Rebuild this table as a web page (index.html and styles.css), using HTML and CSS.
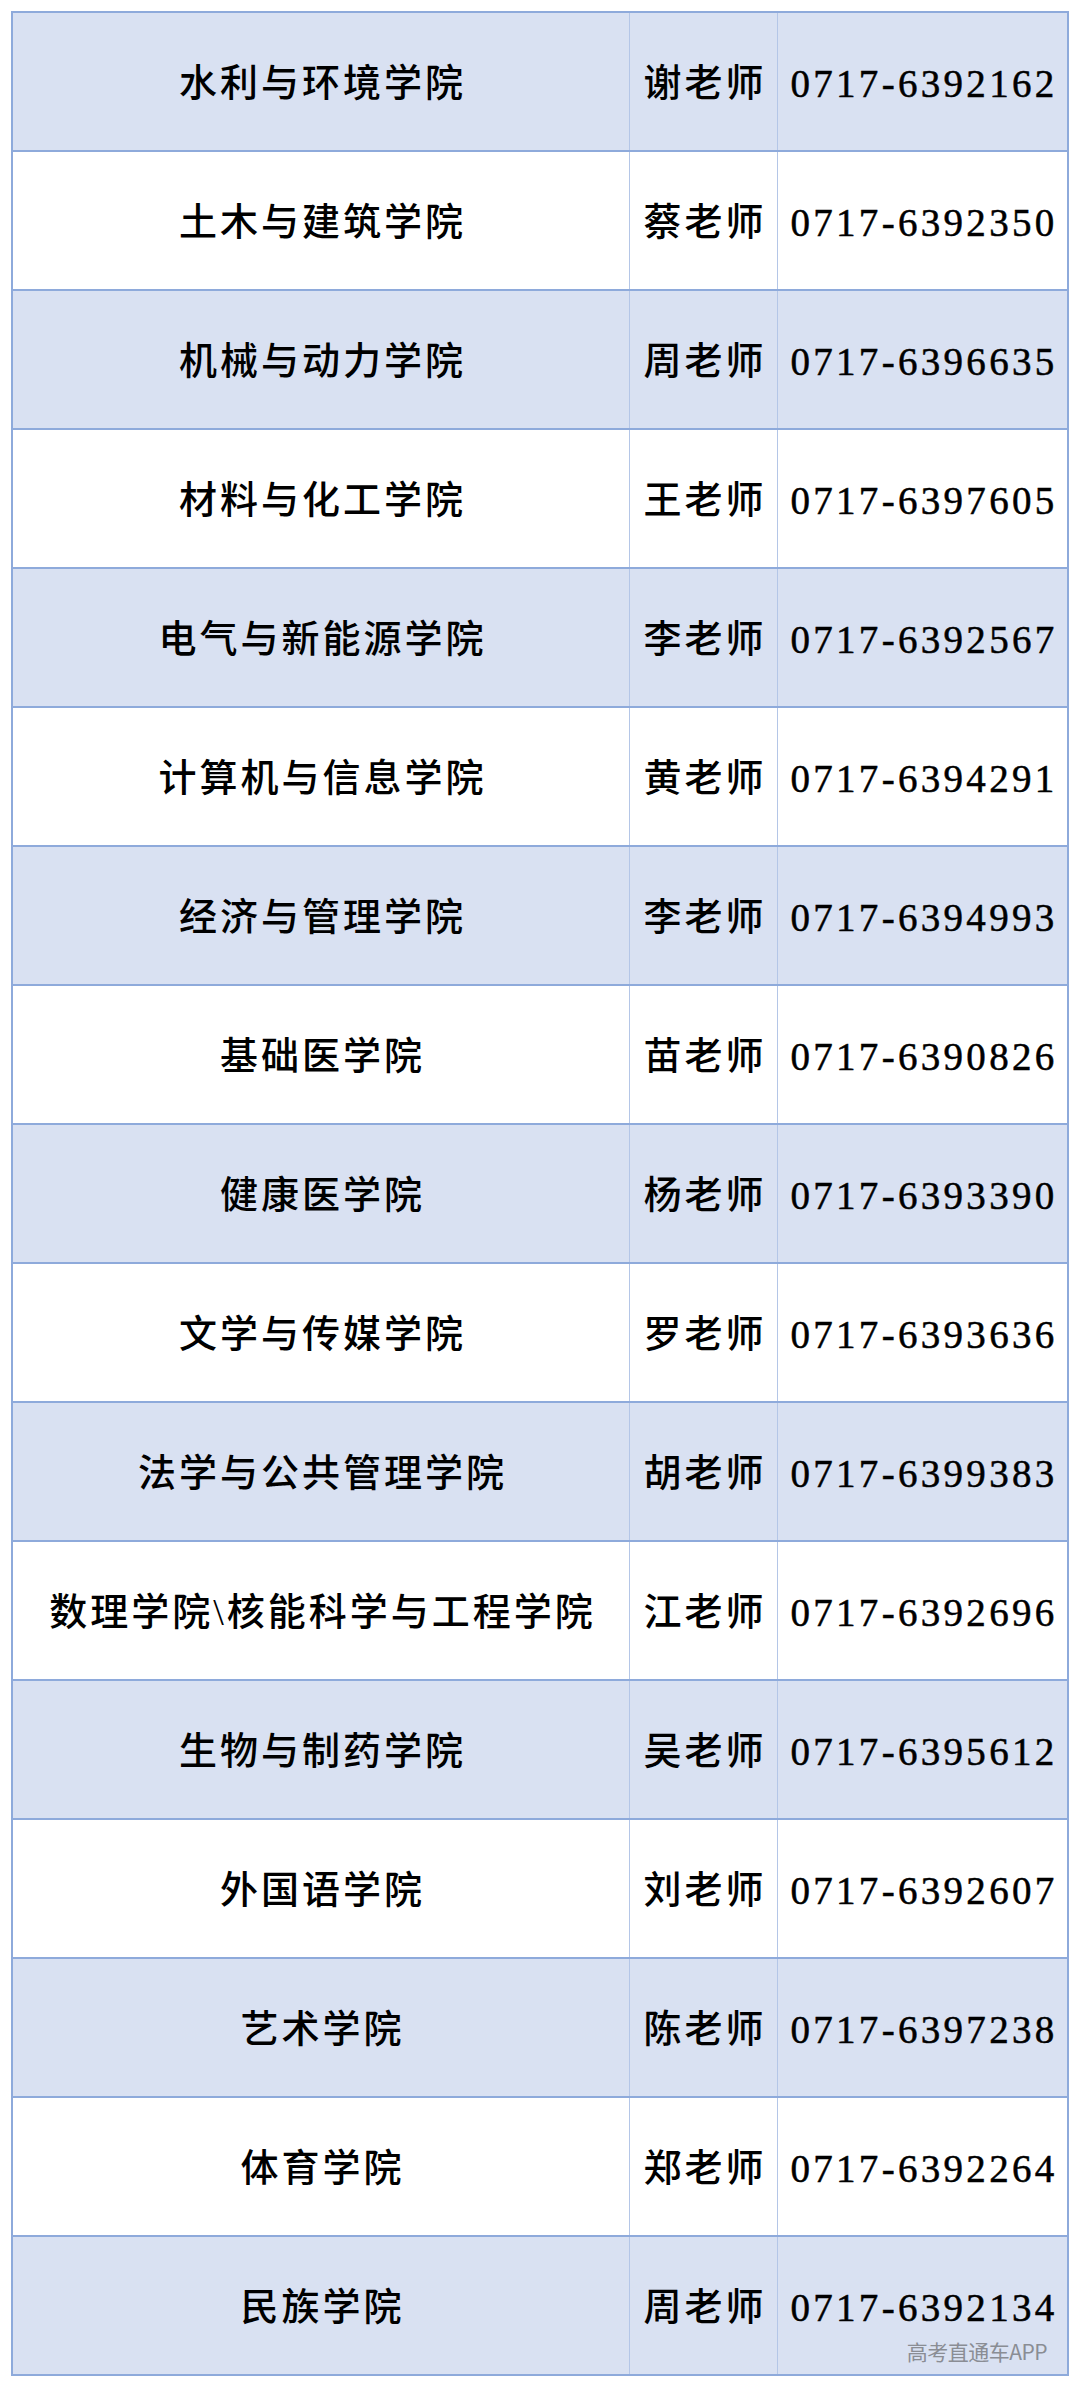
FILE: index.html
```html
<!DOCTYPE html>
<html lang="zh-CN">
<head>
<meta charset="utf-8">
<title>学院联系方式</title>
<link rel="stylesheet" href="styles.css">
</head>
<body>
<div class="sheet">
  <div class="row blue"><div class="cell name">水利与环境学院</div><div class="cell who">谢老师</div><div class="cell tel">0717-6392162</div></div>
  <div class="row"><div class="cell name">土木与建筑学院</div><div class="cell who">蔡老师</div><div class="cell tel">0717-6392350</div></div>
  <div class="row blue"><div class="cell name">机械与动力学院</div><div class="cell who">周老师</div><div class="cell tel">0717-6396635</div></div>
  <div class="row"><div class="cell name">材料与化工学院</div><div class="cell who">王老师</div><div class="cell tel">0717-6397605</div></div>
  <div class="row blue"><div class="cell name">电气与新能源学院</div><div class="cell who">李老师</div><div class="cell tel">0717-6392567</div></div>
  <div class="row"><div class="cell name">计算机与信息学院</div><div class="cell who">黄老师</div><div class="cell tel">0717-6394291</div></div>
  <div class="row blue"><div class="cell name">经济与管理学院</div><div class="cell who">李老师</div><div class="cell tel">0717-6394993</div></div>
  <div class="row"><div class="cell name">基础医学院</div><div class="cell who">苗老师</div><div class="cell tel">0717-6390826</div></div>
  <div class="row blue"><div class="cell name">健康医学院</div><div class="cell who">杨老师</div><div class="cell tel">0717-6393390</div></div>
  <div class="row"><div class="cell name">文学与传媒学院</div><div class="cell who">罗老师</div><div class="cell tel">0717-6393636</div></div>
  <div class="row blue"><div class="cell name">法学与公共管理学院</div><div class="cell who">胡老师</div><div class="cell tel">0717-6399383</div></div>
  <div class="row"><div class="cell name">数理学院\核能科学与工程学院</div><div class="cell who">江老师</div><div class="cell tel">0717-6392696</div></div>
  <div class="row blue"><div class="cell name">生物与制药学院</div><div class="cell who">吴老师</div><div class="cell tel">0717-6395612</div></div>
  <div class="row"><div class="cell name">外国语学院</div><div class="cell who">刘老师</div><div class="cell tel">0717-6392607</div></div>
  <div class="row blue"><div class="cell name">艺术学院</div><div class="cell who">陈老师</div><div class="cell tel">0717-6397238</div></div>
  <div class="row"><div class="cell name">体育学院</div><div class="cell who">郑老师</div><div class="cell tel">0717-6392264</div></div>
  <div class="row blue last"><div class="cell name">民族学院</div><div class="cell who">周老师</div><div class="cell tel">0717-6392134</div><span class="mark">高考直通车APP</span></div>
</div>
</body>
</html>
```
FILE: styles.css
```css
html, body {
  margin: 0;
  padding: 0;
  background: #ffffff;
}

body {
  font-family: "Liberation Serif", "Noto Sans CJK SC", serif;
  color: #000000;
}

.sheet {
  margin: 11px 0 0 11px;
  width: 1058px;
  border: 2px solid #8eaadb;
  box-sizing: border-box;
  display: flex;
  flex-direction: column;
}

.row {
  position: relative;
  display: grid;
  grid-template-columns: 616px 148px 1fr;
  height: 139px;
  box-sizing: border-box;
  border-bottom: 2px solid #8eaadb;
  background: #ffffff;
}

.row.blue {
  background: #d9e1f2;
}

.row.last {
  height: 137px;
  border-bottom: none;
}

.cell {
  display: flex;
  align-items: center;
  justify-content: center;
  font-size: 38px;
  font-weight: 500;
  letter-spacing: 3px;
  white-space: nowrap;
  line-height: 1;
  padding-top: 3px;
}

.cell + .cell {
  border-left: 1px solid #b4c6e7;
}

.name, .who {
  padding-left: 3px;
}

.tel {
  font-size: 39px;
  font-weight: 400;
  letter-spacing: 3.3px;
  padding-left: 3px;
  -webkit-text-stroke: 0.5px #000000;
}

.mark {
  position: absolute;
  right: 20px;
  bottom: 12px;
  font-family: "Noto Sans CJK SC", "Noto Sans", sans-serif;
  font-size: 21px;
  font-weight: 400;
  line-height: 1;
  color: #8a8d94;
  letter-spacing: -0.5px;
}
```
